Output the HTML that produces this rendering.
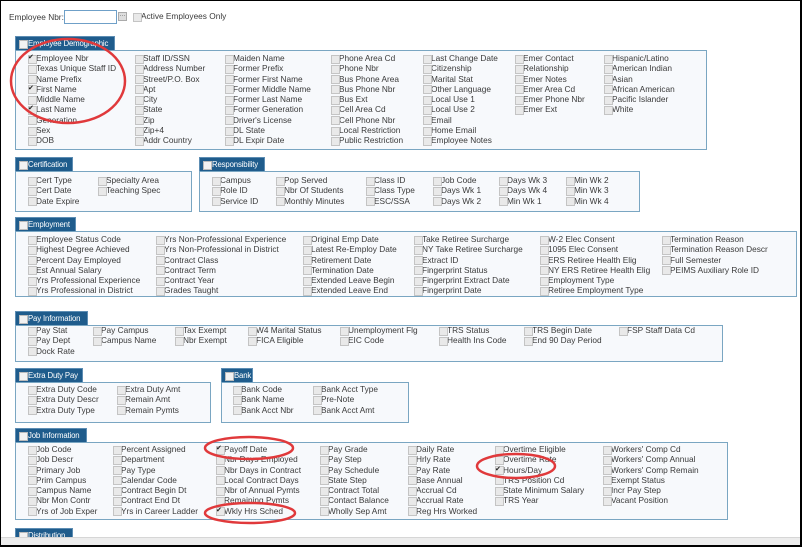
<!DOCTYPE html>
<html><head><meta charset="utf-8"><style>
*{margin:0;padding:0;box-sizing:border-box}
body{width:802px;height:547px;overflow:hidden;background:#fff;font-family:"Liberation Sans",sans-serif;font-size:8.3px;color:#3a3a3a;position:relative}
.frame{position:absolute;left:0;top:0;width:802px;height:547px;border:1px solid #000;border-right-width:2px;border-bottom-width:2px;pointer-events:none;z-index:10}
.bar{position:absolute;left:1px;right:2px;top:537px;height:8px;background:#ececec;border-top:1px solid #d6d6d6;z-index:5}
.tab{position:absolute;height:14px;background:#1f5c8c;color:#fff;font-size:7.8px;letter-spacing:-0.15px;line-height:14px;padding-left:12px;border:1px solid #5d8db3;border-bottom:none;white-space:nowrap;overflow:hidden;z-index:2}
.tab::before{content:"";position:absolute;left:3px;top:3px;width:7px;height:7px;background:#f2f2f2;border:1px solid #bbb}
.box{position:absolute;border:1px solid #7aa6c2;background:#f7f9fc}
.c{position:absolute;z-index:3}
.c p{height:10.3px;line-height:10.3px;white-space:nowrap;padding-left:8px;position:relative}
.c p::before{content:"";position:absolute;left:0;top:1.5px;width:7px;height:7px;background:#e9e9e9;border:1px solid #c4c4c4}
.c p.k::after{content:"✔";position:absolute;left:0;top:0;font-size:7px;color:#222;line-height:9px}
</style></head><body>
<div class="frame"></div>
<div style="position:absolute;left:9px;top:12px">Employee Nbr:</div>
<div style="position:absolute;left:64px;top:10px;width:53px;height:14px;border:1px solid #6fa0c8;background:#fff"></div>
<div style="position:absolute;left:118px;top:12px;width:9px;height:9px;background:#ddd;border:1px solid #aaa;font-size:6px;line-height:6px;text-align:center">···</div>
<div class="c" style="left:133px;top:11px"><p>Active Employees Only</p></div>

<div class="box" style="left:15px;top:50px;width:692px;height:100px"></div>
<div class="tab" style="left:15px;top:36px;width:100px">Employee Demographic</div>
<div class="c" style="left:28px;top:53px"><p class="k">Employee Nbr</p><p>Texas Unique Staff ID</p><p>Name Prefix</p><p class="k">First Name</p><p>Middle Name</p><p class="k">Last Name</p><p>Generation</p><p>Sex</p><p>DOB</p></div>
<div class="c" style="left:135px;top:53px"><p>Staff ID/SSN</p><p>Address Number</p><p>Street/P.O. Box</p><p>Apt</p><p>City</p><p>State</p><p>Zip</p><p>Zip+4</p><p>Addr Country</p></div>
<div class="c" style="left:225px;top:53px"><p>Maiden Name</p><p>Former Prefix</p><p>Former First Name</p><p>Former Middle Name</p><p>Former Last Name</p><p>Former Generation</p><p>Driver's License</p><p>DL State</p><p>DL Expir Date</p></div>
<div class="c" style="left:331px;top:53px"><p>Phone Area Cd</p><p>Phone Nbr</p><p>Bus Phone Area</p><p>Bus Phone Nbr</p><p>Bus Ext</p><p>Cell Area Cd</p><p>Cell Phone Nbr</p><p>Local Restriction</p><p>Public Restriction</p></div>
<div class="c" style="left:423px;top:53px"><p>Last Change Date</p><p>Citizenship</p><p>Marital Stat</p><p>Other Language</p><p>Local Use 1</p><p>Local Use 2</p><p>Email</p><p>Home Email</p><p>Employee Notes</p></div>
<div class="c" style="left:515px;top:53px"><p>Emer Contact</p><p>Relationship</p><p>Emer Notes</p><p>Emer Area Cd</p><p>Emer Phone Nbr</p><p>Emer Ext</p></div>
<div class="c" style="left:604px;top:53px"><p>Hispanic/Latino</p><p>American Indian</p><p>Asian</p><p>African American</p><p>Pacific Islander</p><p>White</p></div>

<div class="box" style="left:15px;top:171px;width:177px;height:41px"></div>
<div class="tab" style="left:15px;top:157px;width:58px">Certification</div>
<div class="c" style="left:28px;top:175px"><p>Cert Type</p><p>Cert Date</p><p>Date Expire</p></div>
<div class="c" style="left:98px;top:175px"><p>Specialty Area</p><p>Teaching Spec</p></div>

<div class="box" style="left:199px;top:171px;width:441px;height:41px"></div>
<div class="tab" style="left:199px;top:157px;width:66px">Responsibility</div>
<div class="c" style="left:212px;top:175px"><p>Campus</p><p>Role ID</p><p>Service ID</p></div>
<div class="c" style="left:276px;top:175px"><p>Pop Served</p><p>Nbr Of Students</p><p>Monthly Minutes</p></div>
<div class="c" style="left:366px;top:175px"><p>Class ID</p><p>Class Type</p><p>ESC/SSA</p></div>
<div class="c" style="left:433px;top:175px"><p>Job Code</p><p>Days Wk 1</p><p>Days Wk 2</p></div>
<div class="c" style="left:499px;top:175px"><p>Days Wk 3</p><p>Days Wk 4</p><p>Min Wk 1</p></div>
<div class="c" style="left:566px;top:175px"><p>Min Wk 2</p><p>Min Wk 3</p><p>Min Wk 4</p></div>

<div class="box" style="left:15px;top:231px;width:782px;height:66px"></div>
<div class="tab" style="left:15px;top:217px;width:61px">Employment</div>
<div class="c" style="left:28px;top:234px"><p>Employee Status Code</p><p>Highest Degree Achieved</p><p>Percent Day Employed</p><p>Est Annual Salary</p><p>Yrs Professional Experience</p><p>Yrs Professional in District</p></div>
<div class="c" style="left:156px;top:234px"><p>Yrs Non-Professional Experience</p><p>Yrs Non-Professional in District</p><p>Contract Class</p><p>Contract Term</p><p>Contract Year</p><p>Grades Taught</p></div>
<div class="c" style="left:303px;top:234px"><p>Original Emp Date</p><p>Latest Re-Employ Date</p><p>Retirement Date</p><p>Termination Date</p><p>Extended Leave Begin</p><p>Extended Leave End</p></div>
<div class="c" style="left:414px;top:234px"><p>Take Retiree Surcharge</p><p>NY Take Retiree Surcharge</p><p>Extract ID</p><p>Fingerprint Status</p><p>Fingerprint Extract Date</p><p>Fingerprint Date</p></div>
<div class="c" style="left:540px;top:234px"><p>W-2 Elec Consent</p><p>1095 Elec Consent</p><p>ERS Retiree Health Elig</p><p>NY ERS Retiree Health Elig</p><p>Employment Type</p><p>Retiree Employment Type</p></div>
<div class="c" style="left:662px;top:234px"><p>Termination Reason</p><p>Termination Reason Descr</p><p>Full Semester</p><p>PEIMS Auxiliary Role ID</p></div>

<div class="box" style="left:15px;top:325px;width:708px;height:37px"></div>
<div class="tab" style="left:15px;top:311px;width:73px">Pay Information</div>
<div class="c" style="left:28px;top:325px"><p>Pay Stat</p><p>Pay Dept</p><p>Dock Rate</p></div>
<div class="c" style="left:93px;top:325px"><p>Pay Campus</p><p>Campus Name</p></div>
<div class="c" style="left:175px;top:325px"><p>Tax Exempt</p><p>Nbr Exempt</p></div>
<div class="c" style="left:248px;top:325px"><p>W4 Marital Status</p><p>FICA Eligible</p></div>
<div class="c" style="left:340px;top:325px"><p>Unemployment Flg</p><p>EIC Code</p></div>
<div class="c" style="left:439px;top:325px"><p>TRS Status</p><p>Health Ins Code</p></div>
<div class="c" style="left:524px;top:325px"><p>TRS Begin Date</p><p>End 90 Day Period</p></div>
<div class="c" style="left:619px;top:325px"><p>FSP Staff Data Cd</p></div>

<div class="box" style="left:15px;top:382px;width:196px;height:41px"></div>
<div class="tab" style="left:15px;top:368px;width:68px">Extra Duty Pay</div>
<div class="c" style="left:28px;top:384px"><p>Extra Duty Code</p><p>Extra Duty Descr</p><p>Extra Duty Type</p></div>
<div class="c" style="left:117px;top:384px"><p>Extra Duty Amt</p><p>Remain Amt</p><p>Remain Pymts</p></div>

<div class="box" style="left:221px;top:382px;width:188px;height:41px"></div>
<div class="tab" style="left:221px;top:368px;width:32px">Bank</div>
<div class="c" style="left:233px;top:384px"><p>Bank Code</p><p>Bank Name</p><p>Bank Acct Nbr</p></div>
<div class="c" style="left:313px;top:384px"><p>Bank Acct Type</p><p>Pre-Note</p><p>Bank Acct Amt</p></div>

<div class="box" style="left:15px;top:442px;width:713px;height:78px"></div>
<div class="tab" style="left:15px;top:428px;width:72px">Job Information</div>
<div class="c" style="left:28px;top:444px"><p>Job Code</p><p>Job Descr</p><p>Primary Job</p><p>Prim Campus</p><p>Campus Name</p><p>Nbr Mon Contr</p><p>Yrs of Job Exper</p></div>
<div class="c" style="left:113px;top:444px"><p>Percent Assigned</p><p>Department</p><p>Pay Type</p><p>Calendar Code</p><p>Contract Begin Dt</p><p>Contract End Dt</p><p>Yrs in Career Ladder</p></div>
<div class="c" style="left:216px;top:444px"><p class="k">Payoff Date</p><p>Nbr Days Employed</p><p>Nbr Days in Contract</p><p>Local Contract Days</p><p>Nbr of Annual Pymts</p><p>Remaining Pymts</p><p class="k">Wkly Hrs Sched</p></div>
<div class="c" style="left:320px;top:444px"><p>Pay Grade</p><p>Pay Step</p><p>Pay Schedule</p><p>State Step</p><p>Contract Total</p><p>Contact Balance</p><p>Wholly Sep Amt</p></div>
<div class="c" style="left:408px;top:444px"><p>Daily Rate</p><p>Hrly Rate</p><p>Pay Rate</p><p>Base Annual</p><p>Accrual Cd</p><p>Accrual Rate</p><p>Reg Hrs Worked</p></div>
<div class="c" style="left:495px;top:444px"><p>Overtime Eligible</p><p>Overtime Rate</p><p class="k">Hours/Day</p><p>TRS Position Cd</p><p>State Minimum Salary</p><p>TRS Year</p></div>
<div class="c" style="left:603px;top:444px"><p>Workers' Comp Cd</p><p>Workers' Comp Annual</p><p>Workers' Comp Remain</p><p>Exempt Status</p><p>Incr Pay Step</p><p>Vacant Position</p></div>

<div class="tab" style="left:15px;top:528px;width:58px;height:10px">Distribution</div>
<div class="bar"></div>

<svg style="position:absolute;left:0;top:0;z-index:6" width="802" height="547">
<g fill="none" stroke="#e0393b" stroke-width="2.5">
<ellipse cx="68" cy="81" rx="57" ry="42"/>
<ellipse cx="249" cy="448" rx="44" ry="11"/>
<ellipse cx="250" cy="513" rx="45" ry="10"/>
<ellipse cx="516" cy="466" rx="39" ry="12"/>
</g></svg>
</body></html>
